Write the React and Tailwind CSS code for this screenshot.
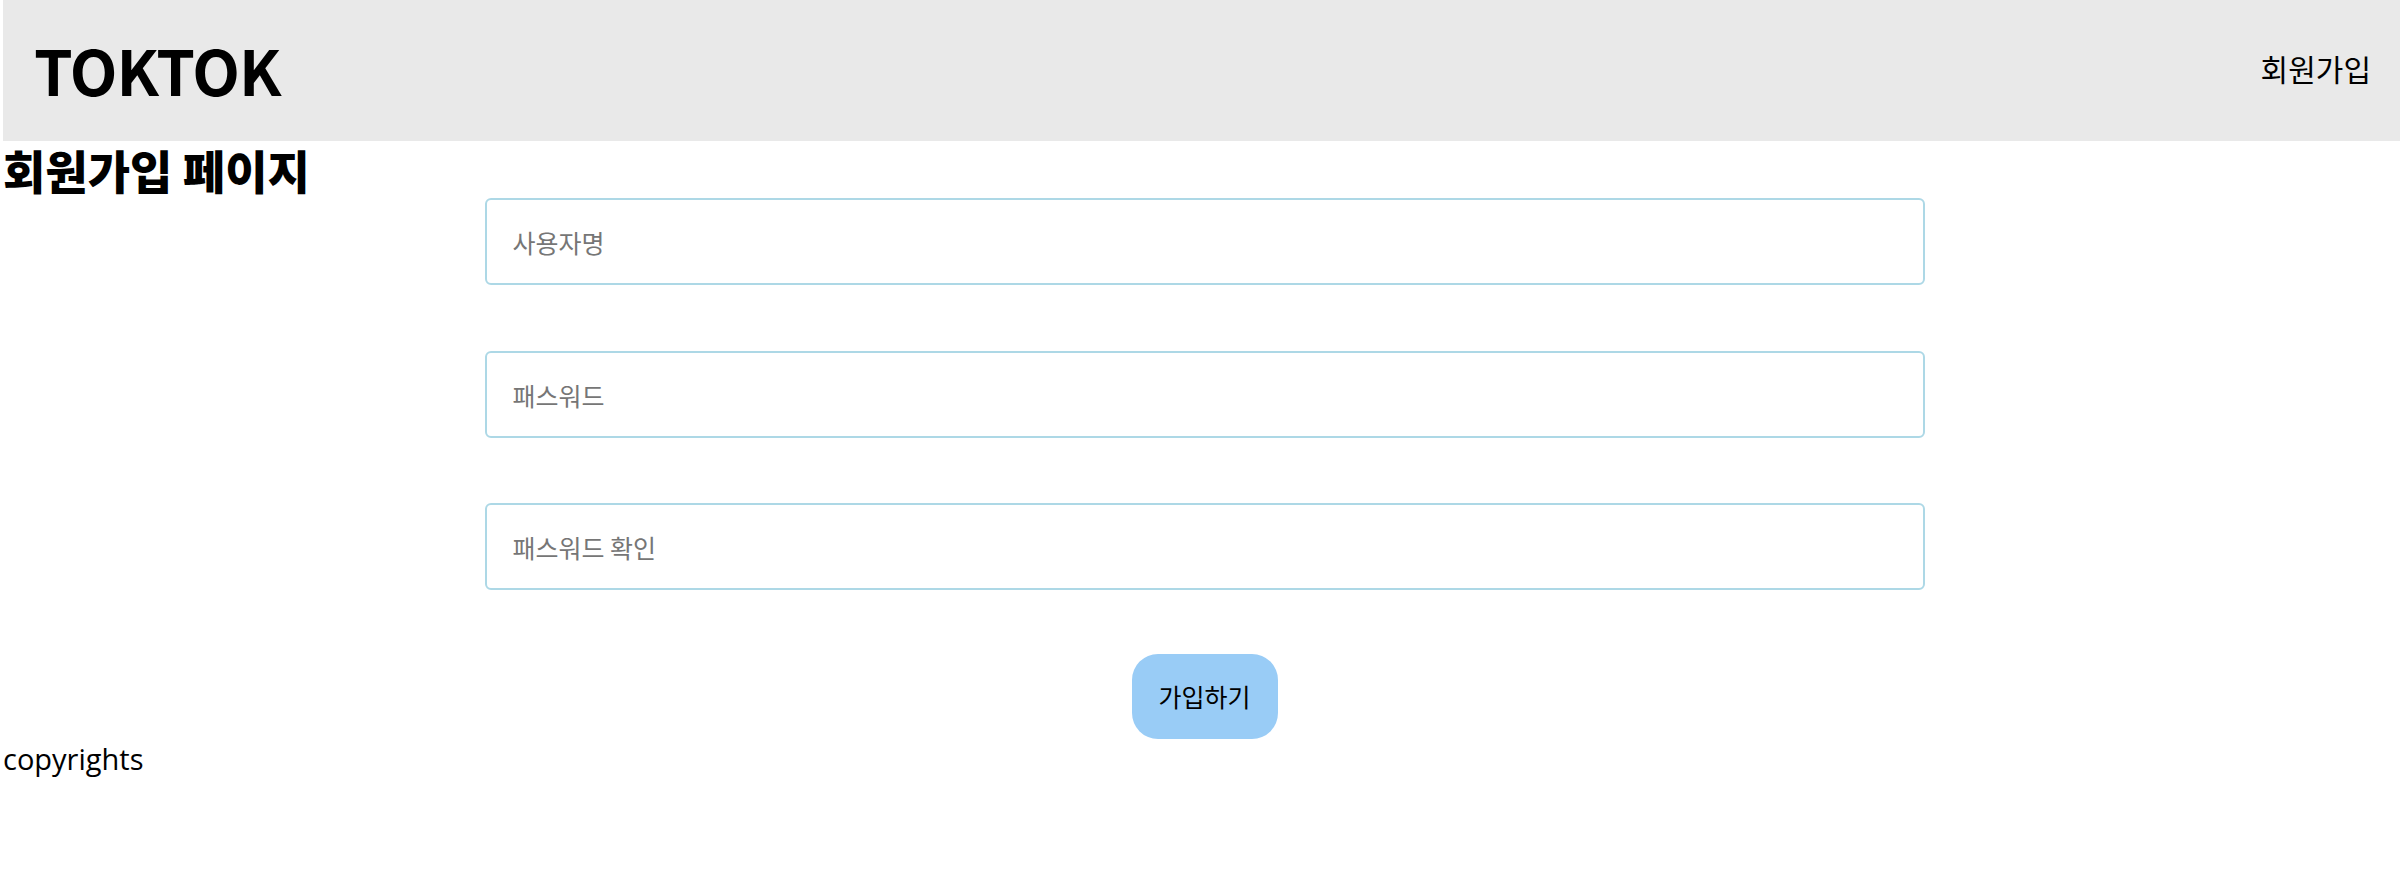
import React from "react";

const kr = { fontFamily: '"Noto Sans CJK KR", "Noto Sans", sans-serif' };

export default function App() {
  return (
    <div className="ml-[3px] bg-white text-black" style={kr}>
      <header className="flex h-[141px] items-center justify-between bg-[#e9e9e9] pl-[31px] pr-[29px]">
        <div className="-mt-[4px] text-[62px] font-bold leading-none tracking-[-1px] text-black">TOKTOK</div>
        <div className="-mt-[6px] text-[30px] leading-none text-black">회원가입</div>
      </header>
      <h1 className="h-[57px] text-[46px] font-black leading-[57px] whitespace-nowrap">
        회원가입 페이지
      </h1>
      <form className="flex flex-col items-center pl-[6px]" onSubmit={(e) => e.preventDefault()}>
        <input
          className="h-[87px] w-[1440px] rounded-[6px] border-2 border-[#add8e6] px-[26px] text-[25px] outline-none placeholder:text-[#767676]"
          placeholder="사용자명"
        />
        <input
          type="password"
          className="mt-[66px] h-[87px] w-[1440px] rounded-[6px] border-2 border-[#add8e6] px-[26px] text-[25px] outline-none placeholder:text-[#767676]"
          placeholder="패스워드"
        />
        <input
          type="password"
          className="mt-[65px] h-[87px] w-[1440px] rounded-[6px] border-2 border-[#add8e6] px-[26px] text-[25px] outline-none placeholder:text-[#767676]"
          placeholder="패스워드 확인"
        />
        <button
          type="submit"
          className="mt-[64px] flex h-[85px] w-[146px] items-center justify-center rounded-[26px] bg-[#99ccf6] text-[25px] text-black"
        >
          가입하기
        </button>
      </form>
      <footer
        className="pt-[2px] text-[29px] leading-[36px]"
        style={{ fontFamily: '"Open Sans", "Noto Sans", sans-serif' }}
      >
        copyrights
      </footer>
    </div>
  );
}
